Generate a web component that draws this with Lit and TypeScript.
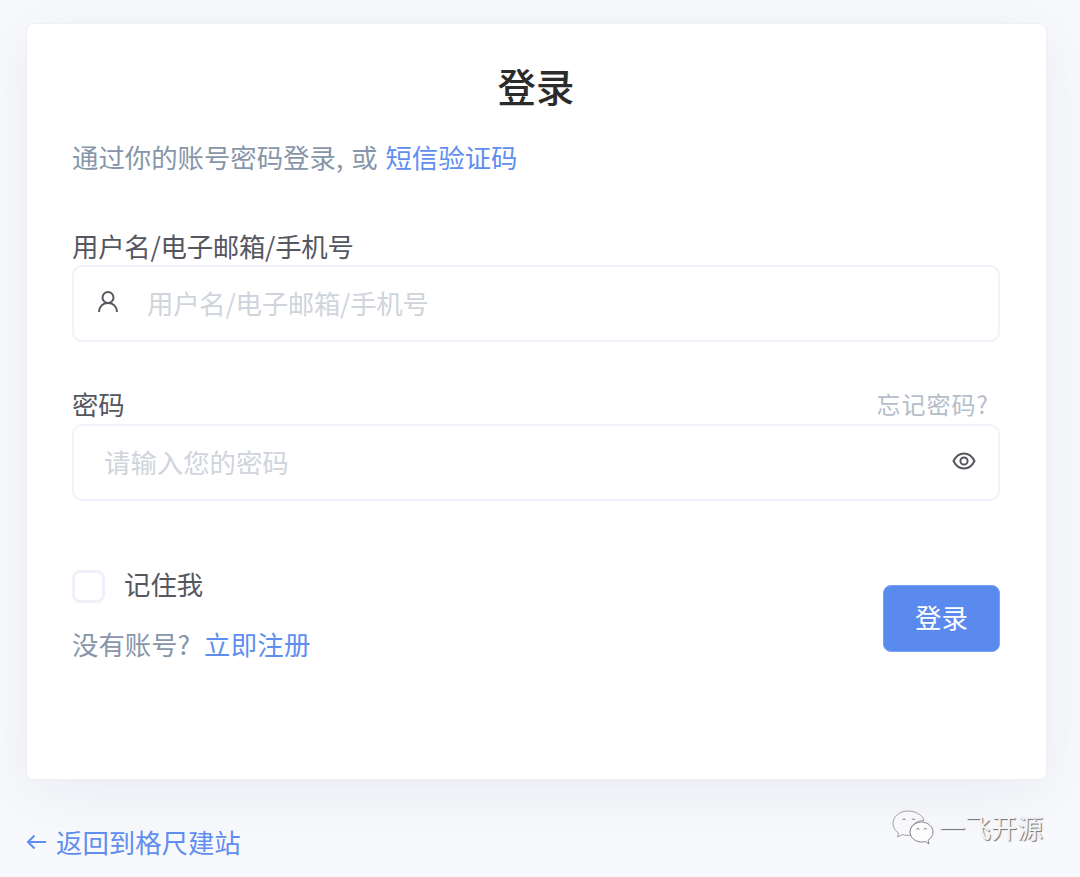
import { LitElement, html, css } from "lit";
import { customElement } from "lit/decorators.js";

@customElement("app-root")
export class AppRoot extends LitElement {
  static styles = css`
    :host {
      display: block;
      position: relative;
      width: 1080px;
      height: 877px;
      overflow: hidden;
      background: #f8f9fc;
      font-family: "Noto Sans CJK SC", "Noto Sans", sans-serif;
      font-size: 26.4px;
      color: #55575f;
    }
    * { box-sizing: border-box; }
    .page { display: flex; flex-direction: column; padding: 23px 33px 0 26px; }
    .card {
      height: 757px;
      display: flex;
      flex-direction: column;
      padding: 37px 46px 0 45px;
      background: #fff;
      border: 1px solid #eef0f6;
      border-radius: 8px;
      box-shadow: 0 12px 60px rgba(70, 80, 130, 0.08);
    }
    .title { margin: 0 0 6px; text-align: center; font-size: 38.4px; line-height: 48px; font-weight: 500; color: #2b2b2b; }
    .sub { margin-top: 24px; margin-bottom: 2px; line-height: 36px; color: #8896aa; word-spacing: 2px; }
    a { color: #5f8ef0; text-decoration: none; }
    .label { display: flex; justify-content: space-between; align-items: flex-start; line-height: 31px; letter-spacing: -0.25px; }
    .label.user { margin-top: 53px; height: 35px; }
    .label.pass { margin-top: 46px; height: 36px; }
    .forgot { color: #b6bdc9; font-size: 24px; padding-right: 11px; letter-spacing: 1px; }
    .field {
      display: flex;
      align-items: center;
      border: 2px solid #f0f3f9;
      border-radius: 10px;
      color: #d0d4dc;
    }
    .field.user { height: 77px; padding-left: 23px; gap: 28px; }
    .field.pass { height: 77px; padding: 0 22px 0 30px; justify-content: space-between; }
    .ph { line-height: 38px; margin-bottom: 2px; }
    .field.user .ph { letter-spacing: -0.25px; }
    .icon { display: block; flex: none; fill: none; stroke: #55575f; stroke-width: 2; }
    .field .icon { margin-bottom: 4px; }
    .bottom { margin-top: 69px; display: flex; justify-content: space-between; align-items: flex-start; }
    .check { display: flex; align-items: flex-start; gap: 19px; height: 33px; line-height: 27px; }
    .box { width: 33px; height: 33px; border: 3px solid #eef1f8; border-radius: 8px; background: #fff; }
    .reg { margin-top: 23px; line-height: 36px; color: #8896aa; word-spacing: 8px; }
    .reg a { letter-spacing: 0.3px; }
    .btn {
      margin-top: 15px;
      width: 117px;
      height: 67px;
      border: 1px solid #7ba1f2;
      border-radius: 8px;
      background: #5b8aef;
      color: #fff;
      font: inherit;
      padding: 0 0 4px;
    }
    .back { margin-top: 43px; display: flex; align-items: center; gap: 10px; line-height: 38px; }
    .back svg { stroke: #5f8ef0; }
    .mark {
      position: absolute;
      left: 892px;
      top: 807px;
      display: flex;
      align-items: center;
      gap: 5px;
      font-size: 26px;
      line-height: 40px;
      color: #f4f5f8;
      text-shadow: 1px 1px 1px #6e6e6e;
    }
    .mark svg { margin-top: 2px; }
  `;

  render() {
    return html`
      <div class="page">
        <div class="card">
          <h1 class="title">登录</h1>
          <div class="sub">通过你的账号密码登录, 或 <a href="#">短信验证码</a></div>
          <div class="label user">用户名/电子邮箱/手机号</div>
          <div class="field user">
            <svg class="icon" width="22" height="24" viewBox="0 0 22 24">
              <circle cx="11" cy="7.5" r="5.5"></circle>
              <path d="M2 22c0-5 3.500-9 9-9s9 4 9 9"></path>
            </svg>
            <span class="ph">用户名/电子邮箱/手机号</span>
          </div>
          <div class="label pass"><span>密码</span><span class="forgot">忘记密码?</span></div>
          <div class="field pass">
            <span class="ph">请输入您的密码</span>
            <svg class="icon" width="24" height="18" viewBox="0 0 24 18">
              <path d="M1.500 9C4 4 7.500 1.500 12 1.500S20 4 22.500 9C20 14 16.500 16.500 12 16.500S4 14 1.500 9Z"></path>
              <circle cx="12" cy="9" r="3.600"></circle>
            </svg>
          </div>
          <div class="bottom">
            <div>
              <div class="check"><span class="box"></span><span>记住我</span></div>
              <div class="reg">没有账号? <a href="#">立即注册</a></div>
            </div>
            <button class="btn">登录</button>
          </div>
        </div>
        <a class="back" href="#">
          <svg class="icon" width="20" height="16" viewBox="0 0 20 16">
            <path d="M20 8H2M8.500 1.500 2 8l6.500 6.500"></path>
          </svg>
          <span>返回到格尺建站</span>
        </a>
      </div>
      <div class="mark">
        <svg width="42" height="36" viewBox="0 0 42 36">
          <path d="M16 1C7.500 1 1 6.500 1 13.500c0 4 2.200 7.300 5.700 9.700L5.500 27l4.800-2.500c2 .6 3.600.9 5.700.9 1 0 1.900-.1 2.800-.2-.3-1-.5-2-.5-3 0-6.500 5.700-11.700 13-11.700l.7 0C30.500 5 24 1 16 1Z" fill="#f8f8fa" stroke="#8a8a8a" stroke-width=".8"></path>
          <path d="M41 22c0-5.500-5.500-10-11.500-10S18 16.500 18 22s5.500 10 11.500 10c1.300 0 2.500-.2 3.700-.5l3.800 2.500-1-3.600C38.800 28.600 41 25.500 41 22Z" fill="#fdfdfe" stroke="#777" stroke-width=".9"></path>
          <path d="M10.500 10a1.600 1.600 0 0 1 3 0M20 10a1.600 1.600 0 0 1 3 0M24.500 19.500a1.400 1.400 0 0 1 2.700 0M32 19.500a1.400 1.400 0 0 1 2.700 0" fill="none" stroke="#777" stroke-width="1"></path>
        </svg>
        <span>一飞开源</span>
      </div>
    `;
  }
}
